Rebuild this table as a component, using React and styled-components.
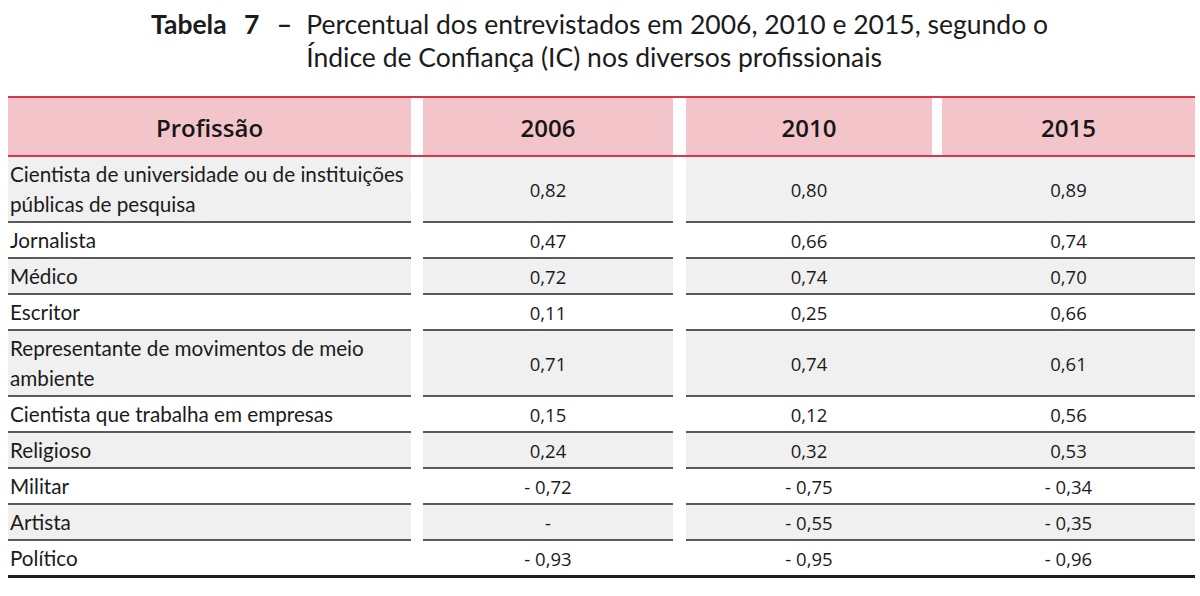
import React from "react";
import styled, { createGlobalStyle } from "styled-components";

const GlobalStyle = createGlobalStyle`
  html, body {
    margin: 0;
    padding: 0;
    background: #ffffff;
  }
  body {
    font-family: Lato, "Open Sans", sans-serif;
    color: #1b1b1b;
  }
`;

const rows = [
  { name: ["Cientista de universidade ou de instituições", "públicas de pesquisa"], v: ["0,82", "0,80", "0,89"] },
  { name: ["Jornalista"], v: ["0,47", "0,66", "0,74"] },
  { name: ["Médico"], v: ["0,72", "0,74", "0,70"] },
  { name: ["Escritor"], v: ["0,11", "0,25", "0,66"] },
  { name: ["Representante de movimentos de meio", "ambiente"], v: ["0,71", "0,74", "0,61"] },
  { name: ["Cientista que trabalha em empresas"], v: ["0,15", "0,12", "0,56"] },
  { name: ["Religioso"], v: ["0,24", "0,32", "0,53"] },
  { name: ["Militar"], v: ["- 0,72", "- 0,75", "- 0,34"] },
  { name: ["Artista"], v: ["-", "- 0,55", "- 0,35"] },
  { name: ["Político"], v: ["- 0,93", "- 0,95", "- 0,96"] },
];

export default function App() {
  return (
    <>
      <GlobalStyle />
      <Page>
        <Caption>
          <Label>Tabela 7 –</Label>
          <CaptionText>
            Percentual dos entrevistados em 2006, 2010 e 2015, segundo o
            <br />
            Índice de Confiança (IC) nos diversos profissionais
          </CaptionText>
        </Caption>

        <Table>
          <Head>
            <HeadCell>Profissão</HeadCell>
            <span />
            <HeadCell>2006</HeadCell>
            <span />
            <HeadCell>2010</HeadCell>
            <span />
            <HeadCell>2015</HeadCell>
          </Head>
          {rows.map((r, i) => {
            const last = i === rows.length - 1;
            return (
              <Row key={i} $shaded={i % 2 === 0}>
                <NameCell $last={last} $multi={r.name.length > 1}>
                  {r.name.map((line, j) => (
                    <div key={j}>{line}</div>
                  ))}
                </NameCell>
                <span />
                <NumCell $last={last}>{r.v[0]}</NumCell>
                <span />
                <NumCell $last={last} $wide>
                  {r.v[1]}
                </NumCell>
                <NumCell $last={last}>{r.v[2]}</NumCell>
              </Row>
            );
          })}
        </Table>
      </Page>
    </>
  );
}

const COLS = "403px 12px 250px 13px 246px 10px 253px";

const Page = styled.div`
  padding: 8px 0 0 8px;
  width: 1187px;
`;

const Caption = styled.div`
  display: flex;
  justify-content: center;
  font-size: 26.5px;
  line-height: 33px;
  padding-right: 4px;
`;

const Label = styled.span`
  font-weight: 700;
  word-spacing: 11px;
  margin-right: 14px;
`;

const CaptionText = styled.span``;

const Table = styled.div`
  margin-top: 22px;
  border-bottom: 3px solid #1f1f1f;
`;

const Head = styled.div`
  display: grid;
  grid-template-columns: ${COLS};
  height: 57px;
  border-top: 2px solid #d8374b;
  border-bottom: 2px solid #d8374b;
`;

const HeadCell = styled.div`
  background: #f3c5ca;
  display: flex;
  align-items: center;
  justify-content: center;
  font-family: "Open Sans", sans-serif;
  font-size: 24px;
  font-weight: 600;
  color: #161616;
  padding-top: 2px;
`;

const Row = styled.div`
  display: grid;
  grid-template-columns: ${COLS};
  --bg: ${(p) => (p.$shaded ? "#f0f0f0" : "#ffffff")};
`;

const Cell = styled.div`
  background: var(--bg);
  border-bottom: ${(p) => (p.$last ? "none" : "2px solid #5a5a5a")};
  padding: 3px 0 2px;
  line-height: 29px;
`;

const NameCell = styled(Cell)`
  font-size: 20.7px;
  padding-left: 2px;
  line-height: ${(p) => (p.$multi ? "29.5px" : "29px")};
`;

const NumCell = styled(Cell)`
  display: flex;
  align-items: center;
  justify-content: center;
  font-family: "Open Sans", sans-serif;
  font-size: 18.5px;
  grid-column: ${(p) => (p.$wide ? "span 2" : "auto")};
  padding-right: ${(p) => (p.$wide ? "10px" : "0")};
`;
